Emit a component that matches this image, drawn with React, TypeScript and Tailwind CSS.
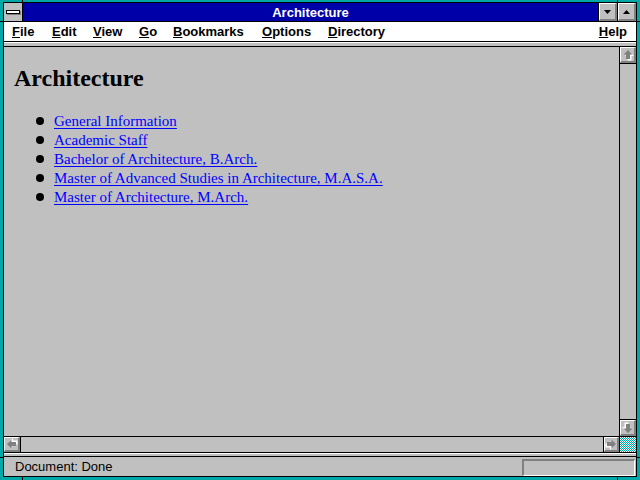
const links = [
  'General Information',
  'Academic Staff',
  'Bachelor of Architecture, B.Arch.',
  'Master of Advanced Studies in Architecture, M.A.S.A.',
  'Master of Architecture, M.Arch.',
];

const menus = [
  { key: 'F', rest: 'ile', w: 'w-[40px]' },
  { key: 'E', rest: 'dit', w: 'w-[41px]' },
  { key: 'V', rest: 'iew', w: 'w-[46px]' },
  { key: 'G', rest: 'o', w: 'w-[34px]' },
  { key: 'B', rest: 'ookmarks', w: 'w-[89px]' },
  { key: 'O', rest: 'ptions', w: 'w-[66px]' },
  { key: 'D', rest: 'irectory', w: 'w-[90px]' },
];

const bevel =
  'bg-[#c0c0c0] border-t border-l border-t-white border-l-white border-r-2 border-b-2 border-r-[#808080] border-b-[#808080]';

// grey "disabled" block arrow, drawn pointing up and rotated
function ScrollArrow({ rotate }: { rotate: string }) {
  return (
    <svg width="12" height="12" viewBox="0 0 12 12" className={rotate}>
      <polygon points="6.5,1.5 11,6 8.5,6 8.5,10.5 4.5,10.5 4.5,6 2,6" fill="#ffffff" transform="translate(1 1)" />
      <polygon points="6,1 10.5,5.5 8,5.5 8,10 4,10 4,5.5 1.5,5.5" fill="#808080" />
    </svg>
  );
}

function ScrollButton({ rotate, cls }: { rotate: string; cls: string }) {
  return (
    <div className={`${bevel} ${cls} flex items-center justify-center`}>
      <ScrollArrow rotate={rotate} />
    </div>
  );
}

function Tick({ cls }: { cls: string }) {
  return <div className={`absolute bg-black ${cls}`} />;
}

export default function App() {
  return (
    <div className="relative w-[640px] h-[480px] bg-[#00a8a8] pt-[2px] px-[3px] pb-[3px] font-['Liberation_Sans',Arial,sans-serif] text-black">
      {/* frame corner ticks */}
      <Tick cls="left-[22px] top-0 w-px h-[2px]" />
      <Tick cls="left-[617px] top-0 w-px h-[2px]" />
      <Tick cls="left-[22px] bottom-0 w-px h-[3px]" />
      <Tick cls="left-[617px] bottom-0 w-px h-[3px]" />
      <Tick cls="left-0 top-[21px] w-[3px] h-px" />
      <Tick cls="left-0 top-[457px] w-[3px] h-px" />
      <Tick cls="right-0 top-[21px] w-[3px] h-px" />
      <Tick cls="right-0 top-[457px] w-[3px] h-px" />

      <div className="h-full border border-black flex flex-col bg-[#c0c0c0]">
        {/* title bar */}
        <div className="h-[18px] flex shrink-0">
          <div className="w-[19px] border-r border-black bg-[#c0c0c0] flex items-center justify-center">
            <div className="w-[14px] h-[4px] border border-black bg-white shadow-[1px_1px_0_#808080] -ml-[1px]" />
          </div>
          <div className="flex-1 bg-[#0000a8] text-white font-bold text-[13px] leading-[16px] pt-[2px] text-center">
            Architecture
          </div>
          <div className="w-[19px] border-l border-black">
            <div className={`${bevel} h-full flex items-center justify-center`}>
              <svg width="7" height="4" viewBox="0 0 7 4">
                <polygon points="0,0 7,0 3.5,4" fill="#000" />
              </svg>
            </div>
          </div>
          <div className="w-[19px] border-l border-black">
            <div className={`${bevel} h-full flex items-center justify-center`}>
              <svg width="7" height="4" viewBox="0 0 7 4">
                <polygon points="3.5,0 7,4 0,4" fill="#000" />
              </svg>
            </div>
          </div>
        </div>
        <div className="h-px bg-black shrink-0" />

        {/* menu bar */}
        <div className="h-[19px] bg-white flex pl-[8px] pr-[9px] text-[13px] font-bold leading-[19px] shrink-0">
          {menus.map((m) => (
            <div key={m.key} className={m.w}>
              <span className="underline underline-offset-[1px]">{m.key}</span>
              {m.rest}
            </div>
          ))}
          <div className="ml-auto">
            <span className="underline underline-offset-[1px]">H</span>elp
          </div>
        </div>
        <div className="h-px bg-black shrink-0" />
        <div className="h-px bg-white shrink-0" />
        <div className="h-[3px] bg-[#c0c0c0] shrink-0" />
        <div className="h-px bg-black shrink-0" />

        {/* document + vertical scrollbar */}
        <div className="flex-1 flex min-h-0">
          <div className="flex-1 bg-[#c0c0c0] pt-[17px] pl-[10px] font-['Liberation_Serif','Times_New_Roman',serif]">
            <h1 className="text-[24px] leading-[28px] font-bold">Architecture</h1>
            <ul className="mt-[20px] pl-[22px]">
              {links.map((l) => (
                <li key={l} className="flex items-start h-[19px]">
                  <div className="w-2 h-2 rounded-full bg-black mt-[5px] shrink-0" />
                  <span className="ml-[10px] text-[15px] leading-[19px] text-[#0000ff] underline underline-offset-[2px] whitespace-nowrap">
                    {l}
                  </span>
                </li>
              ))}
            </ul>
          </div>
          <div className="w-px bg-black" />
          <div className="w-[16px] flex flex-col">
            <ScrollButton rotate="" cls="h-[16px]" />
            <div className="h-px bg-black" />
            <div className="flex-1 bg-[#c0c0c0]" />
            <div className="h-px bg-black" />
            <ScrollButton rotate="rotate-180" cls="h-[16px]" />
          </div>
        </div>
        <div className="h-px bg-black shrink-0" />

        {/* horizontal scrollbar */}
        <div className="h-[15px] flex shrink-0">
          <ScrollButton rotate="-rotate-90" cls="w-[16px]" />
          <div className="w-px bg-black" />
          <div className="flex-1 bg-[#c0c0c0]" />
          <div className="w-px bg-black" />
          <ScrollButton rotate="rotate-90" cls="w-[15px]" />
          <div className="w-px bg-black" />
          <div className="w-[16px] bg-[repeating-conic-gradient(#00a8a8_0%_25%,#ffffff_0%_50%)] bg-[length:2px_2px]" />
        </div>
        <div className="h-px bg-black shrink-0" />
        <div className="h-px bg-white shrink-0" />
        <div className="h-[2px] bg-[#c0c0c0] shrink-0" />
        <div className="h-px bg-black shrink-0" />

        {/* status bar */}
        <div className="h-[19px] flex bg-[#c0c0c0] shrink-0">
          <div className="pl-[11px] text-[13px] leading-[19px]">Document: Done</div>
          <div className="ml-auto mr-[1px] mt-[2px] w-[113px] h-[17px] border-t-2 border-l-2 border-t-[#808080] border-l-[#808080] border-b border-r border-b-white border-r-white" />
        </div>
      </div>
    </div>
  );
}
